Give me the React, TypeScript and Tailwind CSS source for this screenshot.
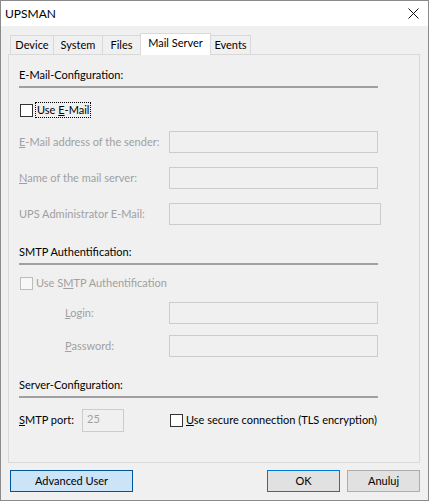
import React from "react";

const disabled = "text-[#a0a0a0]";

function Heading({ title, className }: { title: string; className: string }) {
  return (
    <div className={className}>
      <div className="h-4 leading-4 text-black">{title}</div>
      <div className="mt-[3px] h-[2px] w-[359px] bg-[#a0a0a0]" />
    </div>
  );
}

function TextBox({ className }: { className: string }) {
  return <div className={`h-[22px] border border-[#cccccc] bg-[#f0f0f0] ${className}`} />;
}

function FieldRow({
  label,
  className,
  boxWidth = "w-[209px]",
  indent = false,
}: {
  label: React.ReactNode;
  className: string;
  boxWidth?: string;
  indent?: boolean;
}) {
  return (
    <div className={`flex h-[22px] items-center ${className}`}>
      <div className={`w-[150px] whitespace-nowrap ${disabled} ${indent ? "pl-[46px]" : ""}`}>{label}</div>
      <TextBox className={boxWidth} />
    </div>
  );
}

function CheckBox({ enabled }: { enabled: boolean }) {
  return (
    <div
      className={`h-[13px] w-[13px] shrink-0 border ${
        enabled ? "border-[#333333] bg-white" : "border-[#bcbcbc] bg-[#f7f7f7]"
      }`}
    />
  );
}

const tabs = [
  { name: "Device", w: "w-[44px]" },
  { name: "System", w: "w-[50px]" },
  { name: "Files", w: "w-[39px]" },
  { name: "Mail Server", w: "w-[71px]" },
  { name: "Events", w: "w-[41px]" },
];

export default function App() {
  return (
    <div className="flex h-[501px] w-[429px] flex-col border border-[#8a8a8a] bg-[#f0f0f0] font-['Segoe_UI',Lato,'Liberation_Sans',sans-serif] text-[11px] text-black">
      {/* title bar */}
      <div className="flex h-[25px] shrink-0 items-center justify-between bg-white pl-[4px] pr-[8px]">
        <span className="text-[12px]">UPSMAN</span>
        <svg width="11" height="11" viewBox="0 0 11 11" className="mr-[1px]">
          <path d="M0.5 0.5 L10.5 10.5 M10.5 0.5 L0.5 10.5" stroke="#111" strokeWidth="1" />
        </svg>
      </div>

      <div className="flex flex-1 flex-col px-[7px] pt-[7px]">
        {/* tabs */}
        <div className="flex h-[21px] items-end pl-[2px]">
          {tabs.map((t, i) => {
            const active = t.name === "Mail Server";
            return (
              <div
                key={t.name}
                className={
                  active
                    ? `relative z-10 -mb-px -ml-px flex h-[22px] items-center justify-center border border-b-0 border-[#d9d9d9] bg-white pb-[3px] ${t.w}`
                    : `flex h-[19px] items-center justify-center border border-b-0 border-[#d9d9d9] bg-[#f0f0f0] ${i === 0 ? "" : "-ml-px"} ${t.w}`
                }
              >
                {t.name}
              </div>
            );
          })}
        </div>

        {/* panel */}
        <div className="flex h-[409px] w-[412px] flex-col border border-[#d9d9d9] bg-[#f0f0f0] pl-[10px]">
          <Heading title="E-Mail-Configuration:" className="mt-[12px]" />

          <div className="mt-[14px] flex h-4 items-center pl-px">
            <CheckBox enabled />
            <span className="ml-[2px] border border-dotted border-black px-px leading-[14px]">
              Use <u>E</u>-Mail
            </span>
          </div>

          <FieldRow
            className="mt-[13px]"
            label={
              <>
                <u>E</u>-Mail address of the sender:
              </>
            }
          />
          <FieldRow
            className="mt-[14px]"
            label={
              <>
                <u>N</u>ame of the mail server:
              </>
            }
          />
          <FieldRow className="mt-[14px]" boxWidth="w-[212px]" label="UPS Administrator E-Mail:" />

          <Heading title="SMTP Authentification:" className="mt-[19px]" />

          <div className="mt-[10px] flex h-4 items-center pl-px">
            <CheckBox enabled={false} />
            <span className={`ml-[3px] ${disabled}`}>
              Use S<u>M</u>TP Authentification
            </span>
          </div>

          <FieldRow
            className="mt-[11px]"
            indent
            label={
              <>
                <u>L</u>ogin:
              </>
            }
          />
          <FieldRow
            className="mt-[11px]"
            indent
            label={
              <>
                <u>P</u>assword:
              </>
            }
          />

          <Heading title="Server-Configuration:" className="mt-[20px]" />

          <div className="mt-[11px] flex h-[23px] items-center">
            <div className="w-[63px] whitespace-nowrap">
              <u>S</u>MTP port:
            </div>
            <div className={`flex h-[23px] w-[42px] items-center border border-[#cccccc] bg-[#f0f0f0] pl-[4px] pb-[2px] ${disabled}`}>
              25
            </div>
            <div className="ml-[46px] flex items-center">
              <CheckBox enabled />
              <span className="ml-[3px] whitespace-nowrap">
                <u>U</u>se secure connection (TLS encryption)
              </span>
            </div>
          </div>
        </div>

        {/* buttons */}
        <div className="mt-[7px] flex h-[22px] items-center pl-[2px]">
          <div className="flex h-[22px] w-[123px] items-center justify-center border border-[#005499] bg-[#cce4f7]">
            Advanced User
          </div>
          <div className="ml-auto flex h-[22px] w-[73px] items-center justify-center border border-[#0078d7] bg-[#e1e1e1]">
            OK
          </div>
          <div className="ml-[7px] mr-[1px] flex h-[22px] w-[73px] items-center justify-center border border-[#adadad] bg-[#e1e1e1]">
            Anuluj
          </div>
        </div>
      </div>
    </div>
  );
}
